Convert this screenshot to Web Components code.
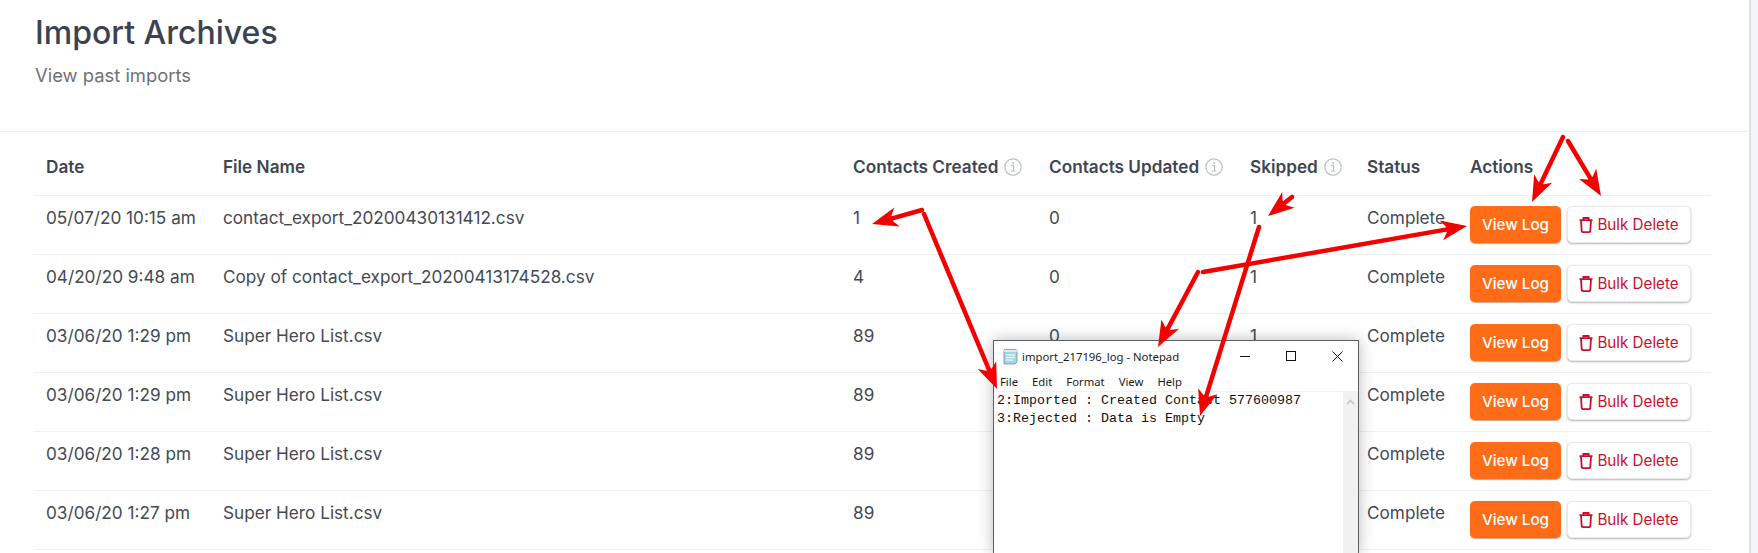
<!DOCTYPE html>
<html lang="en">
<head>
<meta charset="utf-8">
<title>Import Archives</title>
<style>
  html, body { margin: 0; height: 100%; background: #fff; overflow: hidden; }
  body { font-family: Inter, "Noto Sans", sans-serif; color: #3f4653; }
</style>
</head>
<body>
<archive-page>
  <page-header slot="header">
    <span slot="title">Import Archives</span>
    <span slot="subtitle">View past imports</span>
  </page-header>
  <import-table>
    <import-head></import-head>
    <import-row date="05/07/20 10:15 am" file="contact_export_20200430131412.csv" created="1" updated="0" skipped="1"></import-row>
    <import-row date="04/20/20 9:48 am" file="Copy of contact_export_20200413174528.csv" created="4" updated="0" skipped="1"></import-row>
    <import-row date="03/06/20 1:29 pm" file="Super Hero List.csv" created="89" updated="0" skipped="1"></import-row>
    <import-row date="03/06/20 1:29 pm" file="Super Hero List.csv" created="89"></import-row>
    <import-row date="03/06/20 1:28 pm" file="Super Hero List.csv" created="89"></import-row>
    <import-row date="03/06/20 1:27 pm" file="Super Hero List.csv" created="89"></import-row>
  </import-table>
  <notepad-window slot="over" name="import_217196_log - Notepad">2:Imported : Created Contact 577600987
3:Rejected : Data is Empty</notepad-window>
  <red-arrows slot="over"></red-arrows>
</archive-page>

<script>
// Colonnes partagées entre l'en-tête et les lignes
const COLUMNS = '177px 630px 196px 201px 117px 103px 241px';

class ArchivePage extends HTMLElement {
  constructor() {
    super();
    this.attachShadow({ mode: 'open' });
    this.shadowRoot.innerHTML = `
      <style>
        :host { display: flex; position: relative; height: 553px; overflow: hidden; background: #fff; }
        main { flex: 1; min-width: 0; }
        aside { width: 7px; background: #f4f5f8; border-left: 2px solid #dfe1e6; }
      </style>
      <main>
        <slot name="header"></slot>
        <slot></slot>
      </main>
      <aside></aside>
      <slot name="over"></slot>
    `;
  }
}

class PageHeader extends HTMLElement {
  constructor() {
    super();
    this.attachShadow({ mode: 'open' });
    this.shadowRoot.innerHTML = `
      <style>
        :host { display: block; height: 131px; padding-left: 35px; border-bottom: 1px solid #eff0f2; }
        h1 { margin: 0; padding-top: 13px; font-size: 32px; line-height: 40px; font-weight: 500; color: #3c4350; }
        p { margin: 0; padding-top: 10px; font-size: 18.4px; line-height: 24px; color: #6f7276; }
      </style>
      <h1><slot name="title"></slot></h1>
      <p><slot name="subtitle"></slot></p>
    `;
  }
}

class ImportTable extends HTMLElement {
  constructor() {
    super();
    this.attachShadow({ mode: 'open' });
    this.shadowRoot.innerHTML = `
      <style>
        :host { display: block; width: 1677px; margin-left: 34px; }
      </style>
      <slot></slot>
    `;
  }
}

class InfoIcon extends HTMLElement {
  constructor() {
    super();
    this.attachShadow({ mode: 'open' });
    this.shadowRoot.innerHTML = `
      <style>
        :host { display: inline-block; width: 18px; height: 18px; margin-left: 6px; }
        svg { display: block; }
      </style>
      <svg width="18" height="18" viewBox="0 0 18 18" fill="none">
        <circle cx="9" cy="9" r="8.2" stroke="#b9c0cb" stroke-width="1.2"/>
        <circle cx="9" cy="5" r="1.1" fill="#b9c0cb"/>
        <path d="M7.2 7.7H9.6V12.8M7 13H11.2" stroke="#b9c0cb" stroke-width="1.2"/>
      </svg>
    `;
  }
}

class ImportHead extends HTMLElement {
  constructor() {
    super();
    this.attachShadow({ mode: 'open' });
    const info = '<info-icon></info-icon>';
    this.shadowRoot.innerHTML = `
      <style>
        :host { display: grid; grid-template-columns: ${COLUMNS}; height: 63px; border-bottom: 1px solid #eff0f2; font-size: 17.2px; line-height: 24px; font-weight: 600; color: #3f4653; }
        div { padding: 23px 0 0 12px; display: flex; align-items: center; height: 24px; white-space: nowrap; }
      </style>
      <div>Date</div>
      <div>File Name</div>
      <div>Contacts Created${info}</div>
      <div>Contacts Updated${info}</div>
      <div>Skipped${info}</div>
      <div>Status</div>
      <div>Actions</div>
    `;
  }
}

class ActionButton extends HTMLElement {
  constructor() {
    super();
    this.attachShadow({ mode: 'open' });
    this.shadowRoot.innerHTML = `
      <style>
        :host { display: inline-flex; align-items: center; justify-content: center; box-sizing: border-box; height: 37px; border-radius: 5px; font-size: 15.2px; cursor: pointer; white-space: nowrap; }
        :host([variant="primary"]) { width: 91px; background: #ff6c17; color: #fff; font-weight: 500; box-shadow: 0 1px 1px rgba(160,70,10,.5); }
        :host([variant="danger"]) { width: 124px; background: #fff; color: #c8102e; border: 1px solid #e8e9ec; box-shadow: 0 1px 2px rgba(0,0,0,.3); }
        svg { display: none; margin-right: 4px; }
        :host([variant="danger"]) svg { display: block; }
      </style>
      <svg width="14" height="16" viewBox="0 0 14 16" fill="none" stroke="#c8102e" stroke-width="1.8">
        <path d="M0.5 3.2H13.5M4.4 3V1H9.6V3M2 3.4L2.7 14.2Q2.8 15.1 3.8 15.1H10.2Q11.2 15.1 11.3 14.2L12 3.4"/>
      </svg>
      <slot></slot>
    `;
  }
}

class ImportRow extends HTMLElement {
  constructor() {
    super();
    this.attachShadow({ mode: 'open' });
  }

  connectedCallback() {
    const get = (name) => this.getAttribute(name) || '';
    this.shadowRoot.innerHTML = `
      <style>
        :host { display: grid; grid-template-columns: ${COLUMNS}; height: 58px; border-bottom: 1px solid #eff0f2; font-size: 17.2px; line-height: 24px; color: #434a55; }
        div { padding: 10px 0 0 12px; white-space: nowrap; }
        .actions { padding-top: 10px; display: flex; gap: 6px; align-items: flex-start; }
      </style>
      <div>${get('date')}</div>
      <div>${get('file')}</div>
      <div>${get('created')}</div>
      <div>${get('updated')}</div>
      <div>${get('skipped')}</div>
      <div>Complete</div>
      <div class="actions">
        <action-button variant="primary">View Log</action-button>
        <action-button variant="danger">Bulk Delete</action-button>
      </div>
    `;
  }
}

class NotepadWindow extends HTMLElement {
  constructor() {
    super();
    this.attachShadow({ mode: 'open' });
  }

  connectedCallback() {
    this.shadowRoot.innerHTML = `
      <style>
        :host { display: flex; flex-direction: column; position: absolute; left: 993px; top: 340px; bottom: 0; width: 366px; box-sizing: border-box; border: 1px solid #5c5f63; border-bottom: 0; background: #fff; box-shadow: 0 0 14px rgba(0,0,0,.28); font-family: "Noto Sans", "Open Sans", sans-serif; font-size: 11.3px; color: #1a1a1a; }
        .title { display: flex; align-items: center; height: 31px; padding-left: 8px; }
        .title svg { margin-right: 4px; }
        .name { flex: 1; white-space: nowrap; }
        .ctrl { width: 46px; height: 31px; display: flex; align-items: center; justify-content: center; }
        .ctrl svg { margin: 0 0 0 4px; }
        .menu { display: flex; height: 19px; align-items: center; padding-left: 6px; gap: 14px; }
        .body { flex: 1; display: flex; min-height: 0; }
        .text { flex: 1; margin: 0; padding: 0 0 0 3px; border-top: 1px solid #f0f0f0; font-family: "Liberation Mono", monospace; font-size: 13.33px; line-height: 18px; color: #111; white-space: pre; overflow: hidden; }
        .scroll { width: 15px; background: #f1f1f1; display: flex; justify-content: center; padding-top: 8px; box-sizing: border-box; }
      </style>
      <div class="title">
        <svg width="16" height="17" viewBox="0 0 16 17">
          <path d="M2 2H15V14L13 16H2Z" fill="#a9d4e4" stroke="#6d8fa0" stroke-width=".8"/>
          <path d="M2 2H15V4H2Z" fill="#dfe7ea"/>
          <path d="M4 7H13M4 9.5H13M4 12H11" stroke="#ffffff" stroke-width="1"/>
          <path d="M3 2V.8M5 2V.8M7 2V.8M9 2V.8M11 2V.8M13 2V.8" stroke="#666" stroke-width=".8"/>
        </svg>
        <span class="name">${this.getAttribute('name')}</span>
        <span class="ctrl"><svg width="11" height="11"><path d="M0 5.5H10" stroke="#111"/></svg></span>
        <span class="ctrl"><svg width="11" height="11"><rect x=".5" y=".5" width="9" height="9" fill="none" stroke="#111"/></svg></span>
        <span class="ctrl"><svg width="11" height="11"><path d="M.5 .5L10.5 10.5M10.5 .5L.5 10.5" stroke="#111"/></svg></span>
      </div>
      <div class="menu"><span>File</span><span>Edit</span><span>Format</span><span>View</span><span>Help</span></div>
      <div class="body">
        <pre class="text"><slot></slot></pre>
        <div class="scroll"><svg width="9" height="6"><path d="M1 5L4.5 1.5L8 5" fill="none" stroke="#c4c4c4" stroke-width="1.6"/></svg></div>
      </div>
    `;
  }
}

// Flèches d'annotation rouges : [départ x, y, pointe x, y]
const ARROWS = [
  [922, 210, 872, 224],
  [924, 214, 997, 389],
  [1292, 197, 1268, 216],
  [1259, 227, 1200, 416],
  [1203, 272, 1467, 226],
  [1198, 272, 1158, 347],
  [1563, 137, 1532, 202],
  [1568, 141, 1601, 196]
];

class RedArrows extends HTMLElement {
  constructor() {
    super();
    this.attachShadow({ mode: 'open' });
    const shapes = ARROWS.map(([x1, y1, x2, y2]) => {
      const len = Math.hypot(x2 - x1, y2 - y1);
      const ux = (x2 - x1) / len, uy = (y2 - y1) / len;
      const at = (back, side) => `${(x2 - ux * back - uy * side).toFixed(1)},${(y2 - uy * back + ux * side).toFixed(1)}`;
      const head = [at(0, 0), at(26, 10), at(21, 3), at(21, -3), at(26, -10)].join(' ');
      const ex = x2 - ux * 20, ey = y2 - uy * 20;
      return `<path d="M${x1} ${y1}L${ex.toFixed(1)} ${ey.toFixed(1)}" stroke="#f40000" stroke-width="4.5" stroke-linecap="round"/><polygon points="${head}" fill="#f40000"/>`;
    }).join('');
    this.shadowRoot.innerHTML = `
      <style>
        :host { position: absolute; inset: 0; pointer-events: none; }
        svg { display: block; }
      </style>
      <svg width="1758" height="553">${shapes}</svg>
    `;
  }
}

customElements.define('archive-page', ArchivePage);
customElements.define('page-header', PageHeader);
customElements.define('import-table', ImportTable);
customElements.define('info-icon', InfoIcon);
customElements.define('import-head', ImportHead);
customElements.define('action-button', ActionButton);
customElements.define('import-row', ImportRow);
customElements.define('notepad-window', NotepadWindow);
customElements.define('red-arrows', RedArrows);
</script>
</body>
</html>
